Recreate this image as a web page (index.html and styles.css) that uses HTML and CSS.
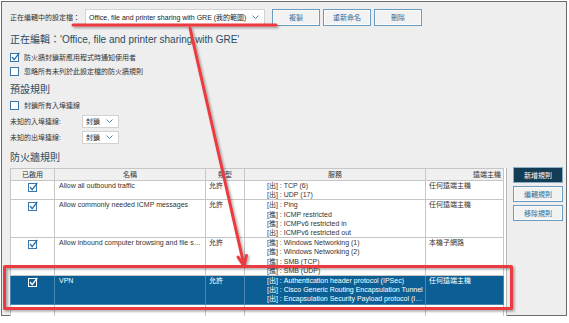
FILE: index.html
```html
<!DOCTYPE html>
<html lang="zh-Hant">
<head>
<meta charset="UTF-8" />
<title>防火牆設定檔</title>
<link rel="stylesheet" href="styles.css">
</head>
<body>

<div class="window">
  <div class="toolbar">
    <span class="label">正在編輯中的設定檔：</span>
    <div class="dropdown profile">
      <span>Office, file and printer sharing with GRE (我的範圍)</span>
      <svg class="chev" width="7" height="4" viewBox="0 0 7 4"><path d="M0.5 0.5 L3.5 3.5 L6.5 0.5"/></svg>
    </div>
    <button class="btn">複製</button>
    <button class="btn">重新命名</button>
    <button class="btn">刪除</button>
  </div>

  <div class="heading">正在編輯：'Office, file and printer sharing with GRE'</div>

  <div class="check-row">
    <svg class="cb" width="10" height="10" viewBox="0 0 10 10"><rect x="0.5" y="1.5" width="8" height="8"/><path class="tick" d="M2 5 L4.2 7.6 L9.3 0.8"/></svg>
    防火牆封鎖新應用程式時通知使用者
  </div>
  <div class="check-row gap2">
    <svg class="cb" width="10" height="10" viewBox="0 0 10 10"><rect x="0.5" y="1.5" width="8" height="8"/></svg>
    忽略所有未列於此設定檔的防火牆規則
  </div>

  <div class="heading h2">預設規則</div>
  <div class="check-row gap1">
    <svg class="cb" width="10" height="10" viewBox="0 0 10 10"><rect x="0.5" y="1.5" width="8" height="8"/></svg>
    封鎖所有入埠連線
  </div>
  <div class="sel-row first">
    <span class="sel-label">未知的入埠連線:</span>
    <div class="dropdown small">
      <span>封鎖</span>
      <svg class="chev" width="7" height="4" viewBox="0 0 7 4"><path d="M0.5 0.5 L3.5 3.5 L6.5 0.5"/></svg>
    </div>
  </div>
  <div class="sel-row">
    <span class="sel-label">未知的出埠連線:</span>
    <div class="dropdown small">
      <span>封鎖</span>
      <svg class="chev" width="7" height="4" viewBox="0 0 7 4"><path d="M0.5 0.5 L3.5 3.5 L6.5 0.5"/></svg>
    </div>
  </div>

  <div class="heading h3">防火牆規則</div>

  <div class="rules">
    <div class="list">
      <table>
        <colgroup>
          <col class="c-on"><col class="c-name"><col class="c-type"><col class="c-svc"><col class="c-host">
        </colgroup>
        <thead>
          <tr><th>已啟用</th><th>名稱</th><th>類型</th><th>服務</th><th class="th-host">遠端主機</th></tr>
        </thead>
        <tbody>
          <tr>
            <td class="on"><svg class="cb" width="10" height="10" viewBox="0 0 10 10"><rect x="0.5" y="1.5" width="8" height="8"/><path class="tick" d="M2 5 L4.2 7.6 L9.3 0.8"/></svg></td>
            <td class="name">Allow all outbound traffic</td>
            <td>允許</td>
            <td class="svc"><div>[出] : TCP (6)</div><div>[出] : UDP (17)</div></td>
            <td>任何遠端主機</td>
          </tr>
          <tr>
            <td class="on"><svg class="cb" width="10" height="10" viewBox="0 0 10 10"><rect x="0.5" y="1.5" width="8" height="8"/><path class="tick" d="M2 5 L4.2 7.6 L9.3 0.8"/></svg></td>
            <td class="name">Allow commonly needed ICMP messages</td>
            <td>允許</td>
            <td class="svc"><div>[出] : Ping</div><div>[進] : ICMP restricted</div><div>[進] : ICMPv6 restricted in</div><div>[出] : ICMPv6 restricted out</div></td>
            <td>任何遠端主機</td>
          </tr>
          <tr>
            <td class="on"><svg class="cb" width="10" height="10" viewBox="0 0 10 10"><rect x="0.5" y="1.5" width="8" height="8"/><path class="tick" d="M2 5 L4.2 7.6 L9.3 0.8"/></svg></td>
            <td class="name">Allow inbound computer browsing and file sharing</td>
            <td>允許</td>
            <td class="svc"><div>[進] : Windows Networking (1)</div><div>[進] : Windows Networking (2)</div><div>[進] : SMB (TCP)</div><div>[進] : SMB (UDP)</div></td>
            <td>本機子網路</td>
          </tr>
          <tr class="selected">
            <td class="on"><svg class="cb" width="10" height="10" viewBox="0 0 10 10"><rect x="0.5" y="1.5" width="8" height="8"/><path class="tick" d="M2 5 L4.2 7.6 L9.3 0.8"/></svg></td>
            <td class="name">VPN</td>
            <td>允許</td>
            <td class="svc"><div>[出] : Authentication header protocol (IPSec)</div><div>[出] : Cisco Generic Routing Encapsulation Tunnel</div><div>[出] : Encapsulation Security Payload protocol (IPSec)</div></td>
            <td>任何遠端主機</td>
          </tr>
          <tr class="filler"><td></td><td></td><td></td><td></td><td></td></tr>
        </tbody>
      </table>
    </div>

    <div class="side">
      <button class="btn primary">新增規則</button>
      <button class="btn">編輯規則</button>
      <button class="btn">移除規則</button>
    </div>
  </div>
</div>

<svg class="annot" width="569" height="323" viewBox="0 0 569 323">
  <defs>
    <filter id="shadow" x="-5%" y="-5%" width="110%" height="110%">
      <feDropShadow dx="1.5" dy="1.5" stdDeviation="1" flood-color="#000" flood-opacity="0.35"/>
    </filter>
  </defs>
  <g filter="url(#shadow)">
    <line x1="73" y1="25" x2="276" y2="25"/>
    <line x1="190" y1="28" x2="244" y2="265"/>
    <path d="M238 257 L244 266 L246.5 255.5"/>
    <rect x="4.5" y="266.5" width="507" height="42"/>
  </g>
</svg>

</body>
</html>
```

FILE: styles.css
```css
body {
  margin: 0;
  width: 569px;
  height: 323px;
  overflow: hidden;
  position: relative;
  background: #fff;
  font-family: "Liberation Sans", "Noto Sans CJK TC", sans-serif;
  font-size: 7px;
  color: #333;
}
.window {
  margin: 1px;
  width: 566px;
  height: 315px;
  box-sizing: border-box;
  border: 1px solid #6b6b6b;
  background: #eeeeee;
  padding: 6px 0 0 8px;
}

/* top bar */
.toolbar {
  display: flex;
  align-items: center;
  height: 18px;
}
.label {
  width: 75px;
  flex-shrink: 0;
}
.dropdown {
  display: flex;
  align-items: center;
  justify-content: space-between;
  box-sizing: border-box;
  background: #fff;
  border: 1px solid #d2d2d2;
  color: #222;
  padding: 0 5px 0 3px;
}
.dropdown.profile {
  width: 180px;
  height: 16px;
  margin-right: 7px;
}
.chev path {
  fill: none;
  stroke: #4d86b3;
  stroke-width: 1;
}
.btn {
  width: 48px;
  height: 17px;
  margin-right: 3px;
  padding: 0;
  border: 1px solid #6a9cc0;
  box-shadow: inset 0 0 0 1px #fbfbfb;
  background: #f2f2f2;
  color: #2f6a96;
  font: inherit;
}

.heading {
  height: 16px;
  line-height: 16px;
  margin-top: 6px;
  font-size: 10px;
  color: #2a4a60;
  white-space: nowrap;
}
.heading.h2, .heading.h3 {
  margin-top: 5px;
}

.check-row {
  display: flex;
  align-items: center;
  gap: 4px;
  height: 12px;
  margin-top: 3px;
}
.check-row.gap2 { margin-top: 2px; }
.check-row.gap1 { margin-top: 1px; }

.cb rect {
  fill: #fff;
  stroke: #3a76a8;
  stroke-width: 1;
}
.cb .tick {
  fill: none;
  stroke: #2a6fa8;
  stroke-width: 1.3;
}

.sel-row {
  display: flex;
  align-items: center;
  height: 16px;
}
.sel-row.first { margin-top: 2px; }
.sel-label {
  width: 72px;
  flex-shrink: 0;
}
.dropdown.small {
  width: 37px;
  height: 13px;
}

/* rules list */
.rules {
  display: flex;
  margin-top: 1px;
}
.list {
  width: 497px;
  height: 148px;
  margin-top: 1px;
  overflow: hidden;
  background: #fff;
  border-right: 1px solid #b8b8b8;
  box-sizing: border-box;
}
table {
  width: 493px;
  table-layout: fixed;
  border-collapse: collapse;
}
.c-on { width: 44px; }
.c-name { width: 151px; }
.c-type { width: 39px; }
.c-svc { width: 181px; }
.c-host { width: 78px; }
th {
  height: 11px;
  padding: 0;
  line-height: 10px;
  font-weight: normal;
  background: #f0f0f0;
  border: 1px solid #c6c6c6;
  color: #333;
}
th.th-host {
  text-align: right;
  padding-right: 2px;
}
td {
  vertical-align: top;
  padding: 0 3px;
  line-height: 9.2px;
  border-left: 1px solid #c6c6c6;
  border-right: 1px solid #c6c6c6;
  border-bottom: 1px solid #c6c6c6;
  white-space: nowrap;
  overflow: hidden;
  text-overflow: ellipsis;
}
td.on {
  text-align: center;
  padding: 1px 0 0;
}
td.on .cb {
  display: block;
  margin: 0 auto;
}
td.name {
  padding-left: 4px;
  padding-right: 1px;
}
td.svc {
  padding-left: 22px;
  padding-right: 0;
}
td.svc div {
  overflow: hidden;
  text-overflow: ellipsis;
}
tr.selected td {
  background: #0b5f94;
  color: #fff;
  border-color: #4a86b0;
}
tr.selected .cb rect {
  fill: none;
  stroke: #fff;
}
tr.selected .cb .tick {
  stroke: #fff;
}
tr.filler td {
  height: 20px;
  border-bottom: none;
}

.side {
  display: flex;
  flex-direction: column;
  gap: 3px;
  margin-left: 6px;
}
.side .btn {
  width: 50px;
  height: 16px;
  margin: 0;
}
.btn.primary {
  background: #123d55;
  border-color: #8aaec4;
  box-shadow: none;
  color: #fff;
}

/* red annotations on top of the screenshot */
.annot {
  position: absolute;
  top: 0;
  left: 0;
  pointer-events: none;
}
.annot line, .annot path, .annot rect {
  fill: none;
  stroke: #ec3b3f;
  stroke-width: 3;
  stroke-linecap: round;
  stroke-linejoin: round;
}
```
